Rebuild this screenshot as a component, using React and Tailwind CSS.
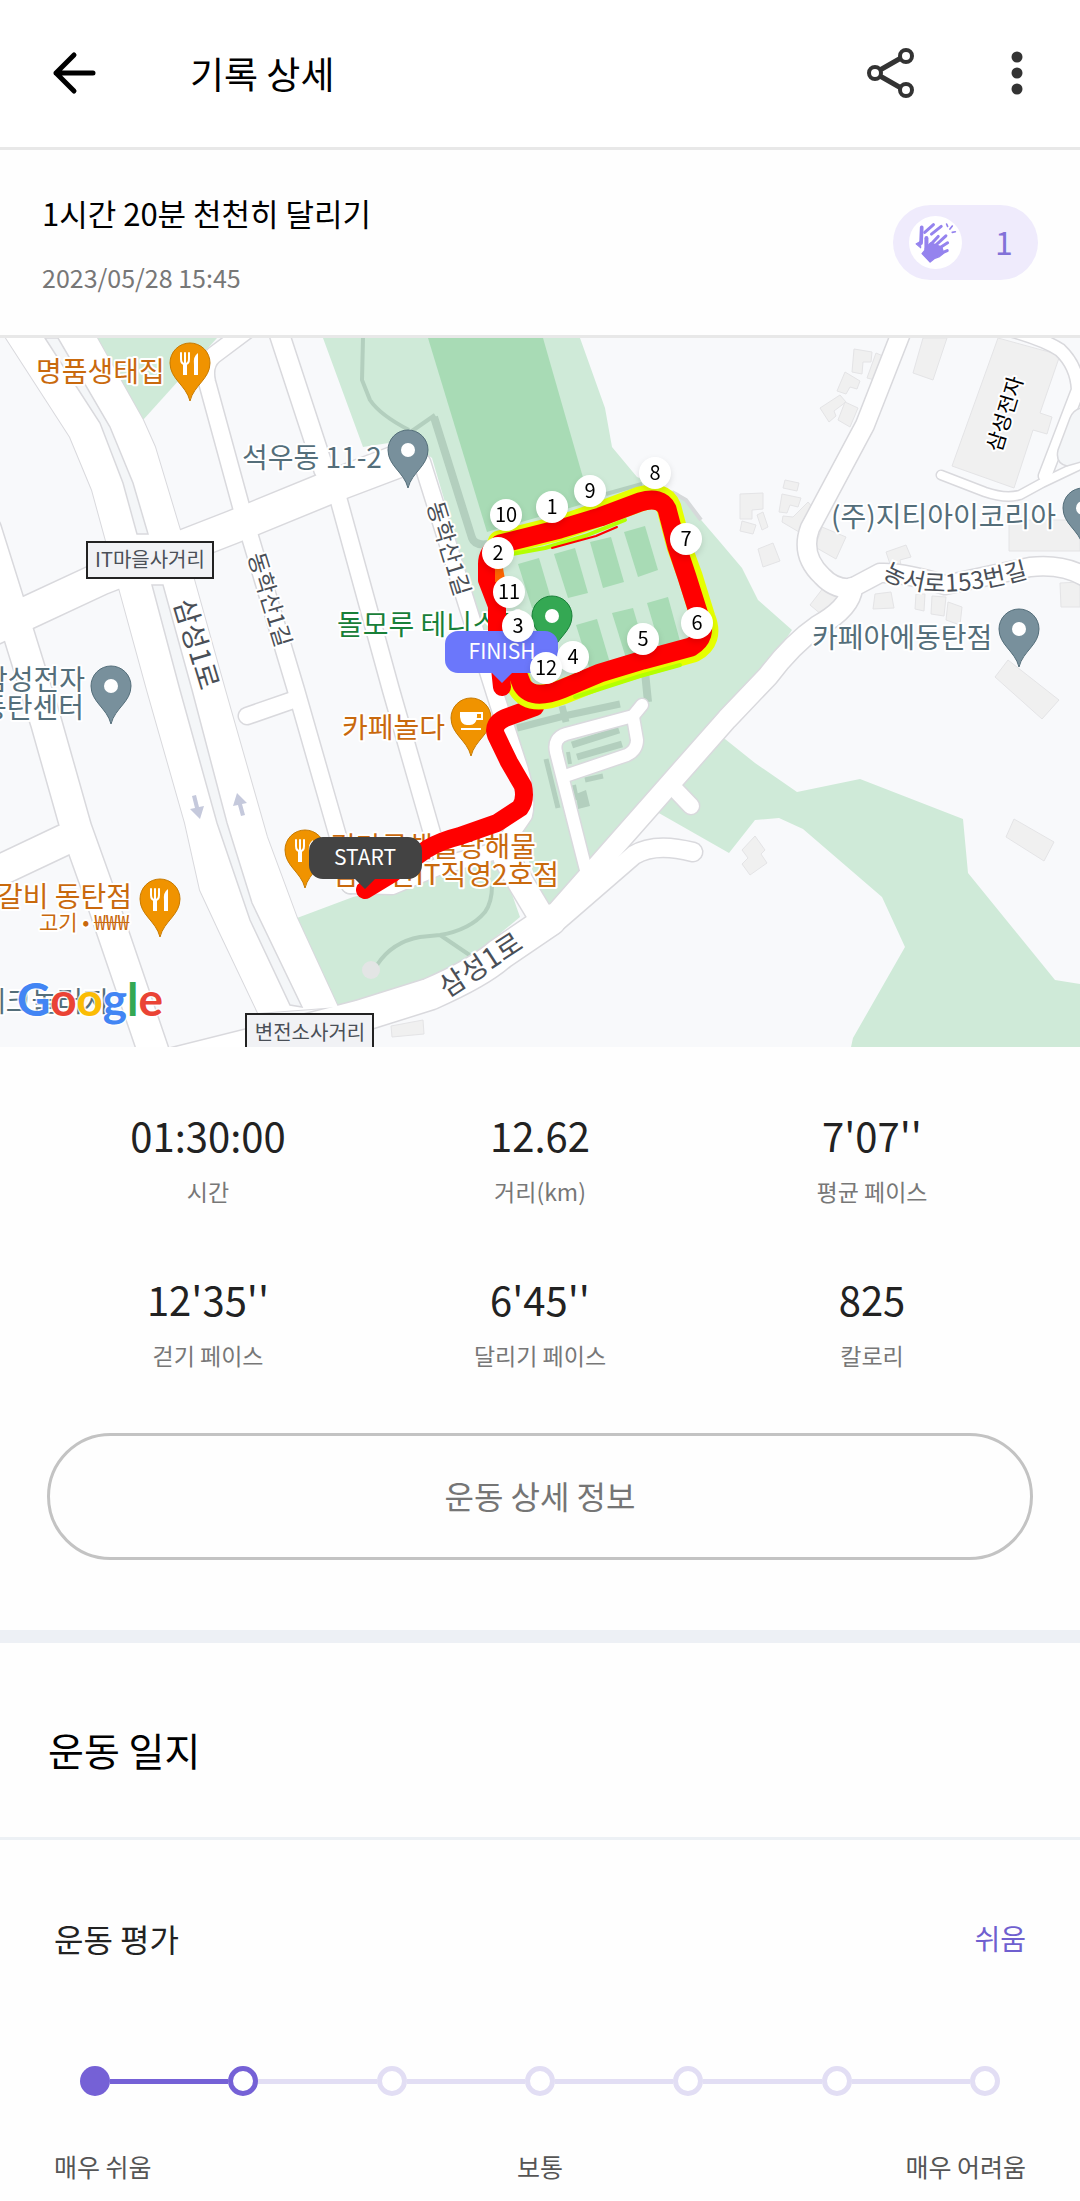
import React from "react";

const FONT = "font-['Noto_Sans_CJK_KR',sans-serif]";

const STATS = [
  { value: "01:30:00", label: "시간" },
  { value: "12.62", label: "거리(km)" },
  { value: "7'07''", label: "평균 페이스" },
  { value: "12'35''", label: "걷기 페이스" },
  { value: "6'45''", label: "달리기 페이스" },
  { value: "825", label: "칼로리" },
];

const LEVELS = ["매우 쉬움", "쉬움", "약간 쉬움", "보통", "약간 어려움", "어려움", "매우 어려움"];

// Road centre lines and widths. Casings are drawn first so that crossings merge.
const ROADS = [
  ["M-10 630 L29 612 L102 578 L233 527 L338 484 L404 459", 33],
  ["M-14 530 L19 635 L46 722 L76 828 L100 895 L158 1065", 31],
  ["M64 840 L-8 874", 31],
  ["M250 328 L214 355 Q203 364 207 382 L242 510 L296 690 L337 833 L350 885", 17],
  ["M247 716 L296 699", 17],
  ["M278 330 L324 470", 20],
  ["M336 490 L391 690 L434 840 L446 865", 17],
  ["M422 462 L497 700 L520 770 Q528 800 524 815 L500 850 L440 866 L392 886 L350 885", 17],
  ["M506 858 L542 918", 26],
  ["M140 1072 L260 1042 L360 1016 L430 994 Q480 972 500 954 L550 920", 32],
  ["M548 922 L727 719 L768 676 Q792 644 818 626 Q850 608 852 588", 21],
  ["M852 588 Q835 590 822 576 Q800 555 810 528 L865 425 L903 328", 19],
  ["M848 590 L880 573 Q905 572 945 585 L1030 567 Q1066 563 1090 580", 19],
  ["M552 926 L634 855 Q655 842 693 852", 19],
  ["M670 784 L691 806", 17],
  ["M586 870 L556 752 Q553 738 566 734 L633 716 L642 705", 13],
  ["M633 717 L637 740 Q637 750 627 755 L565 776", 13],
  ["M941 475 L985 492 Q1005 499 1020 495 L1042 483 L1090 460", 9],
  ["M1045 476 L1078 390 Q1077 366 1060 350 Q1045 340 1010 330", 13],
];

const AVENUE =
  "M6 338 L70 437 L92 490 L106 541 L119 588 L147 690 L185 823 L200 890 L220 933 L258 1013 L338 1007 L297 918 L267 837 L225 690 L195 583 L180 530 L155 447 L143 420 L97 338Z";

const BUILDINGS = [
  "998,338 1060,355 1040,413 1052,417 1047,434 1033,430 1014,488 952,466",
  "923,338 947,338 933,380 913,373",
  "1009,520 1080,520 1080,551 1009,551",
  "854,349 872,352 871,362 863,362 862,374 852,372",
  "876,353 883,356 875,380 867,378",
  "845,372 860,381 857,389 850,387 846,394 837,391",
  "840,395 846,402 834,411 836,416 829,422 820,408",
  "845,402 858,408 850,427 838,420",
  "785,480 799,483 797,491 783,488",
  "740,494 763,493 763,509 752,510 752,519 740,519",
  "782,494 801,498 798,507 790,505 787,513 779,512",
  "808,502 815,510 799,532 782,522 783,516 793,517",
  "757,515 763,512 768,527 762,530",
  "742,521 756,525 753,534 740,531",
  "758,549 773,543 780,561 763,567",
  "822,527 846,537 836,559 815,547",
  "886,552 906,545 911,557 900,560 901,565 891,567",
  "827,583 842,593 822,615 810,605",
  "875,594 891,592 894,608 873,609",
  "916,594 925,594 924,611 915,609",
  "932,596 946,597 944,616 931,614",
  "948,602 962,607 960,625 946,620",
  "1060,583 1080,582 1080,607 1061,607",
  "1008,660 1059,700 1042,719 995,677",
  "755,836 765,850 761,854 767,863 750,875 742,864 748,858 742,850",
  "1014,819 1054,842 1044,861 1006,837",
  "391,1026 423,1020 424,1034 392,1037",
];

const COURTS = [
  "518,564 539,558 552,602 532,608",
  "554,554 575,548 588,593 568,598",
  "590,542 611,537 624,582 603,588",
  "624,532 645,526 658,570 638,577",
  "576,625 597,619 610,663 590,670",
  "612,613 633,608 646,652 626,658",
  "647,603 668,597 680,641 660,647",
];

const SPLITS = [
  [10, 506, 515], [1, 552, 507], [9, 590, 491], [8, 655, 473],
  [7, 686, 539], [2, 498, 553], [11, 509, 592], [3, 518, 626],
  [5, 643, 639], [6, 697, 623], [4, 573, 657], [12, 546, 668],
];

const LOOP =
  "M500 544 L560 529 L600 517 L640 502 Q661 496 667 509 L677 547 L687 577 L700 618 Q708 637 691 647 L643 660 L600 673 L562 689 Q532 701 522 685 L512 660";
const LIME_LOOP =
  "M500 543 L560 528 L600 514 L640 499 Q663 492 669 508 L679 546 L690 576 L703 618 Q712 640 693 650 L643 664 L600 677 L562 692 Q530 704 520 687 L514 664";

function Pin({ x, y, color, edge, kind }) {
  return (
    <g transform={`translate(${x} ${y})`}>
      <path d="M0 38 C-4 22 -20 16 -20 0 A20 20 0 0 1 20 0 C20 16 4 22 0 38Z" fill={color} stroke={edge} strokeWidth="1" />
      {kind === "food" && (
        <g fill="none" stroke="#fff" strokeLinecap="round" strokeWidth="2">
          <path d="M-9 -10 V-4 Q-9 1 -5 1 Q-1 1 -1 -4 V-10 M-5 -10 V0" />
          <path d="M-5 0 V12" strokeWidth="4" strokeLinecap="butt" />
          <path d="M4 2 Q3 -7 8 -10 V12 H4 V2Z" fill="#fff" stroke="none" />
        </g>
      )}
      {kind === "cafe" && (
        <g>
          <path d="M-11 -6 H6 V-1 Q5 7 -1 7 H-4 Q-10 7 -11 -1Z M-10 10 H10 V12 H-10Z" fill="#fff" />
          <path d="M5 -5 H11 V1 H5" fill="none" stroke="#fff" strokeWidth="2" />
        </g>
      )}
      {!kind && <circle r="7" fill="#fff" />}
    </g>
  );
}

function Label({ x, y, fill, size = 28, anchor = "start", rotate = 0, weight = 400, children }) {
  return (
    <text
      transform={`translate(${x} ${y}) rotate(${rotate})`}
      fill={fill}
      fontSize={size}
      fontWeight={weight}
      textAnchor={anchor}
      stroke="#fff"
      strokeWidth="4"
      strokeLinejoin="round"
      paintOrder="stroke"
    >
      {children}
    </text>
  );
}

function RouteMap() {
  const slate = "#546e7a";
  const orange = "#c9690d";
  const road = "#4a4f57";
  return (
    <svg viewBox="0 338 1080 709" className="block w-full" role="img" aria-label="달리기 경로 지도">
      <rect x="0" y="338" width="1080" height="709" fill="#f8f9fb" />

      <g fill="#cfead8">
        <path d="M97 338 H217 L143 420Z" />
        <path d="M297 918 L353 897 L392 888 L440 872 L500 860 L520 917 L480 950 L440 973 L360 1002 L338 1007Z" />
        <path d="M323 338 H580 L605 408 L612 447 L637 477 L678 493 L720 542 L742 568 L758 600 L792 630 L720 735 L755 763 L797 792 L860 779 L963 819 L968 873 L1055 980 L1080 984 V1047 H851 L853 1038 L905 947 L882 897 L803 829 L779 818 L755 820 L729 853 L650 808 L560 900 L547 905 L520 840 L530 810 L500 690 L432 458 L408 440 L363 447Z" />
      </g>
      <g fill="#a8dbb5">
        <path d="M428 338 H543 L590 502 L487 532Z" />
        {COURTS.map((p) => <polygon key={p} points={p} />)}
      </g>
      <g fill="none" stroke="#b3cfbe">
        <path d="M363 338 L362 380 L370 400 Q380 415 409 430" strokeWidth="4" />
        <path d="M412 431 L435 415" strokeWidth="4" />
        <path d="M434 417 L472 538 Q475 546 488 544" strokeWidth="8" />
        <path d="M606 494 L642 484" strokeWidth="4" />
        <path d="M377 965 Q392 942 420 937 L440 935 Q470 930 485 912 Q492 902 492 886 M440 935 L474 958" strokeWidth="4" />
        <path d="M517 728 L564 716 L620 704" strokeWidth="7" />
        <path d="M562 706 L566 722" strokeWidth="7" />
        <path d="M572 745 L619 730 M577 757 L622 744" strokeWidth="7" />
        <path d="M585 780 L603 776 M546 759 L558 808" strokeWidth="5" />
        <path d="M568 752 L570 764 M574 785 L577 800" strokeWidth="4" />
        <path d="M645 672 L648 702" strokeWidth="8" />
      </g>
      <polygon points="576,794 586,790 590,806 578,809" fill="#b3cfbe" />
      <path d="M672 492 L686 500 L701 520" fill="none" stroke="#d6d9da" strokeWidth="4" />
      <circle cx="371" cy="970" r="9" fill="#e3e5e5" />
      <g fill="#f0f0f0" stroke="#e4e4e6">
        {BUILDINGS.map((p) => <polygon key={p} points={p} />)}
      </g>

      <g fill="none" strokeLinejoin="round" strokeLinecap="round">
        <path d={AVENUE} fill="#fff" stroke="#d9d9dd" strokeWidth="2" />
        {ROADS.map(([d, w]) => <path key={d} d={d} stroke="#d9d9dd" strokeWidth={w + 2} />)}
        <path d={AVENUE} fill="#fff" />
        {ROADS.map(([d, w]) => <path key={d} d={d} stroke="#fff" strokeWidth={w - 1} />)}
      </g>
      <g fill="#f4f6f8" stroke="#d9d9dd" strokeWidth="1.5">
        <path d="M45 338 L100 423 L123 483 L137 534 H148 L133 483 L110 427 L58 338Z" />
        <path d="M152 585 H163 L192 690 L227 823 L252 903 L302 1007 L290 1005 L250 920 L217 823 L180 690Z" />
        <path d="M1081 408 Q1073 410 1070 418 L1058 450 Q1055 463 1067 466 L1081 462" />
      </g>
      <g fill="#c5c9dc">
        <path d="M192 796 L196 795 L199 807 L204 806 L200 819 L190 809 L195 808Z" />
        <path d="M237 793 L247 803 L242 804 L245 815 L241 816 L238 805 L233 806Z" />
      </g>

      <Label x={36} y={382} fill={orange}>명품생태집</Label>
      <Label x={242} y={468} fill={slate}>석우동 11-2</Label>
      <Label x={85} y={690} anchor="end" fill={slate}>삼성전자</Label>
      <Label x={84} y={718} anchor="end" fill={slate}>동탄센터</Label>
      <Label x={132} y={907} anchor="end" fill={orange}>갈비 동탄점</Label>
      <Label x={39} y={930} size={21} fill={orange}>고기 • ₩₩₩</Label>
      <Label x={-20} y={1012} fill={slate}>테크놀러지</Label>
      <Label x={337} y={635} fill="#188038">돌모루 테니스장</Label>
      <Label x={342} y={738} fill={orange}>카페놀다</Label>
      <Label x={330} y={857} fill={orange}>김마루해물탕해물</Label>
      <Label x={332} y={885} fill={orange}>점 동탄IT직영2호점</Label>
      <Label x={831} y={527} fill={slate}>(주)지티아이코리아</Label>
      <Label x={812} y={648} fill={slate}>카페아에동탄점</Label>
      <Label x={262} y={602} size={23} rotate={73} anchor="middle" fill={road}>동학산1길</Label>
      <Label x={441} y={551} size={23} rotate={73} anchor="middle" fill={road}>동학산1길</Label>
      <Label x={187} y={647} size={28} rotate={73} anchor="middle" fill={road}>삼성1로</Label>
      <Label x={486} y={973} size={28} rotate={-33} anchor="middle" fill={road}>삼성1로</Label>
      <Label x={1012} y={416} size={21} rotate={-73} anchor="middle" fill="#000">삼성전자</Label>
      <path id="street-153" d="M882 577 Q930 608 1040 574" fill="none" />
      <text fontSize="24" fill={road} stroke="#fff" strokeWidth="4" paintOrder="stroke">
        <textPath href="#street-153">농서로153번길</textPath>
      </text>

      <g stroke="#222" strokeWidth="2" fill="#f1f2f5">
        <rect x="87" y="542" width="126" height="36" />
        <rect x="246" y="1014" width="127" height="40" />
      </g>
      <g fontSize="20" fill="#4a4f57" textAnchor="middle">
        <text x="150" y="567">IT마을사거리</text>
        <text x="310" y="1040">변전소사거리</text>
      </g>

      <Pin x={190} y={363} color="#f09300" edge="#c77a00" kind="food" />
      <Pin x={305} y={850} color="#f09300" edge="#c77a00" kind="food" />
      <Pin x={160} y={899} color="#f09300" edge="#c77a00" kind="food" />
      <Pin x={471} y={718} color="#f09300" edge="#c77a00" kind="cafe" />
      <Pin x={408} y={450} color="#78909c" edge="#546e7a" />
      <Pin x={111} y={686} color="#78909c" edge="#546e7a" />
      <Pin x={1019} y={629} color="#78909c" edge="#546e7a" />
      <Pin x={1083} y={508} color="#78909c" edge="#546e7a" />
      <Pin x={552} y={616} color="#34a853" edge="#188038" />

      <g fill="none" strokeLinejoin="round" strokeLinecap="round">
        <path d="M365 890 L393 873 L427 849 Q440 841 460 836 L497 823 L520 808 Q526 800 523 786 L509 762 L496 735 Q492 724 505 718 L535 707" stroke="#f00" strokeWidth="18" />
        <path d={LIME_LOOP} stroke="#e6ff00" strokeWidth="25" />
        <path d="M512 554 L545 548 L585 536 L625 520" stroke="#b4ff00" strokeWidth="4" />
        <path d="M575 697 L640 676 L680 665" stroke="#b4ff00" strokeWidth="4" />
        <path d={LOOP} stroke="#f00" strokeWidth="19" />
        <path d="M498 545 Q487 552 487 564 V580 L497 606 V640 L502 687" stroke="#f00" strokeWidth="18" />
        <path d="M552 548 L596 536 L617 527" stroke="#f00" strokeWidth="2" />
      </g>
      <path d="M495 560 L503 568 L506 585 L495 582Z" fill="#f60" />

      <g fontSize="21" fill="#fff" textAnchor="middle">
        <path d="M458 631 H545 A13 13 0 0 1 558 644 V660 A13 13 0 0 1 545 673 H512 L502 683 L492 673 H458 A13 13 0 0 1 445 660 V644 A13 13 0 0 1 458 631Z" fill="#6b77fb" />
        <text x="502" y="659">FINISH</text>
        <path d="M323 837 H408 A14 14 0 0 1 422 851 V865 A14 14 0 0 1 408 879 H375 L365 889 L355 879 H323 A14 14 0 0 1 309 865 V851 A14 14 0 0 1 323 837Z" fill="#434343" />
        <text x="365" y="865">START</text>
      </g>

      {SPLITS.map(([n, x, y]) => (
        <g key={n} className="drop-shadow-md">
          <circle cx={x} cy={y} r="16" fill="#fff" />
          <text x={x} y={y + 7} fontSize="20" textAnchor="middle" fill="#000">{n}</text>
        </g>
      ))}

      <text x="17" y="1016" fontSize="46" fontWeight="700" className="font-[Lato,sans-serif]" stroke="#fff" strokeWidth="3" strokeOpacity="0.8" paintOrder="stroke">
        <tspan fill="#4285f4">G</tspan>
        <tspan fill="#ea4335">o</tspan>
        <tspan fill="#fbbc05">o</tspan>
        <tspan fill="#4285f4">g</tspan>
        <tspan fill="#34a853">l</tspan>
        <tspan fill="#ea4335">e</tspan>
      </text>
    </svg>
  );
}

function ClapIcon() {
  return (
    <svg viewBox="165 95 125 125" className="size-[42px]" fill="none" stroke="#9583ee" strokeLinecap="round" strokeLinejoin="round" aria-hidden="true">
      <path d="M185 111 L183 158" strokeWidth="11" />
      <path d="M168 160 L182 152 V172Z" fill="#9583ee" strokeWidth="3" />
      <path d="M194 126 L220 103 M214 131 L243 108" strokeWidth="9" />
      <path d="M199 143 V175" strokeWidth="12" />
      <path d="M211 163 L234 138 M222 168 L257 136 M232 176 L262 157 M238 190 L261 180" strokeWidth="9" />
      <path d="M196 172 L212 157 L245 170 L250 188 L238 198 L224 203 L210 214 L186 189 L194 180Z" fill="#9583ee" strokeWidth="4" />
      <path d="M259 101 L262 108 M276 107 L269 116 M285 124 L276 126" strokeWidth="5" />
    </svg>
  );
}

export default function App() {
  return (
    <main className={`w-full bg-[#fefefe] text-black ${FONT}`}>
      <header className="flex h-[150px] items-center border-b-[3px] border-[#e8e8e8] bg-white pb-0.5 pl-[52px] pr-[42px]">
        <button type="button" aria-label="뒤로">
          <svg viewBox="0 0 44 44" className="size-11" fill="none" stroke="#000" strokeWidth="5" strokeLinecap="round" strokeLinejoin="round">
            <path d="M22 4 L4 22 L22 40 M4 22 H41" />
          </svg>
        </button>
        <h1 className="ml-[94px] text-[37px] leading-[48px]">기록 상세</h1>
        <button type="button" aria-label="공유" className="ml-auto">
          <svg viewBox="0 0 50 54" className="h-[54px] w-[50px]" fill="none" stroke="#333" strokeWidth="4">
            <circle cx="9" cy="27" r="6" />
            <circle cx="40" cy="10" r="6" />
            <circle cx="40" cy="44" r="6" />
            <path d="M14 24 L35 12 M14 30 L35 42" strokeWidth="5" />
          </svg>
        </button>
        <button type="button" aria-label="더보기" className="ml-[80px]">
          <svg viewBox="0 0 42 48" className="h-[48px] w-[42px]" fill="#333">
            <circle cx="21" cy="8" r="5.5" />
            <circle cx="21" cy="24" r="5.5" />
            <circle cx="21" cy="40" r="5.5" />
          </svg>
        </button>
      </header>

      <section className="flex h-[188px] items-center justify-between border-b-[3px] border-[#e8e8e8] px-[42px]">
        <div className="pb-1">
          <h2 className="text-[31px] leading-[48px]">1시간 20분 천천히 달리기</h2>
          <p className="mt-6 text-[25px] leading-[32px] text-[#777]">2023/05/28 15:45</p>
        </div>
        <button type="button" aria-label="박수 1" className="flex h-[75px] w-[145px] items-center rounded-full bg-[#efebfc] pl-4">
          <span className="flex size-[53px] items-center justify-center rounded-full bg-white">
            <ClapIcon />
          </span>
          <span className="flex-1 pb-1 pl-2 text-center text-[32px] leading-[48px] text-[#8271d8]">1</span>
        </button>
      </section>

      <RouteMap />

      <section className="px-[42px] pb-[70px] pt-[64px]">
        <dl className="grid grid-cols-3 gap-y-[68px] text-center">
          {STATS.map((s) => (
            <div key={s.label} className="flex flex-col-reverse gap-4">
              <dt className="text-[23px] leading-[32px] text-[#777]">{s.label}</dt>
              <dd className="text-[40px] leading-[48px] text-[#222]">{s.value}</dd>
            </div>
          ))}
        </dl>
        <div className="mt-[62px] px-[5px]">
          <button type="button" className="h-[127px] w-full rounded-full border-[3px] border-[#c3c3c3] pb-1 text-[32px] leading-[48px] text-[#757575]">
            운동 상세 정보
          </button>
        </div>
      </section>

      <div className="h-[13px] bg-[#edf0f5]" />

      <section>
        <h2 className="border-b-[3px] border-[#edf1f5] pb-[64px] pl-[48px] pt-[82px] text-[39px] leading-[48px]">운동 일지</h2>
        <div className="px-[54px] pb-[18px] pt-[74px]">
          <div className="flex items-center justify-between leading-[48px]">
            <h3 id="rating" className="text-[32px] text-[#222]">운동 평가</h3>
            <output className="text-[28px] text-[#6f5fcf]">쉬움</output>
          </div>
          <div role="radiogroup" aria-labelledby="rating" className="mt-[104px] flex items-center px-[26px]">
            {LEVELS.map((level, i) => (
              <React.Fragment key={level}>
                {i > 0 && <span className={i === 1 ? "h-[5px] flex-1 bg-[#7561d6]" : "h-[5px] flex-1 bg-[#e2def4]"} />}
                <input
                  type="radio"
                  name="level"
                  aria-label={level}
                  defaultChecked={i === 1}
                  className={
                    i === 0
                      ? "size-[30px] appearance-none rounded-full bg-[#7561d6]"
                      : "size-[30px] appearance-none rounded-full border-[5px] border-[#e2def4] bg-white checked:border-[#7561d6]"
                  }
                />
              </React.Fragment>
            ))}
          </div>
          <div className="mt-[54px] grid grid-cols-3 text-[25px] leading-[32px] text-[#555]">
            <span>매우 쉬움</span>
            <span className="text-center">보통</span>
            <span className="text-right">매우 어려움</span>
          </div>
        </div>
      </section>
    </main>
  );
}
